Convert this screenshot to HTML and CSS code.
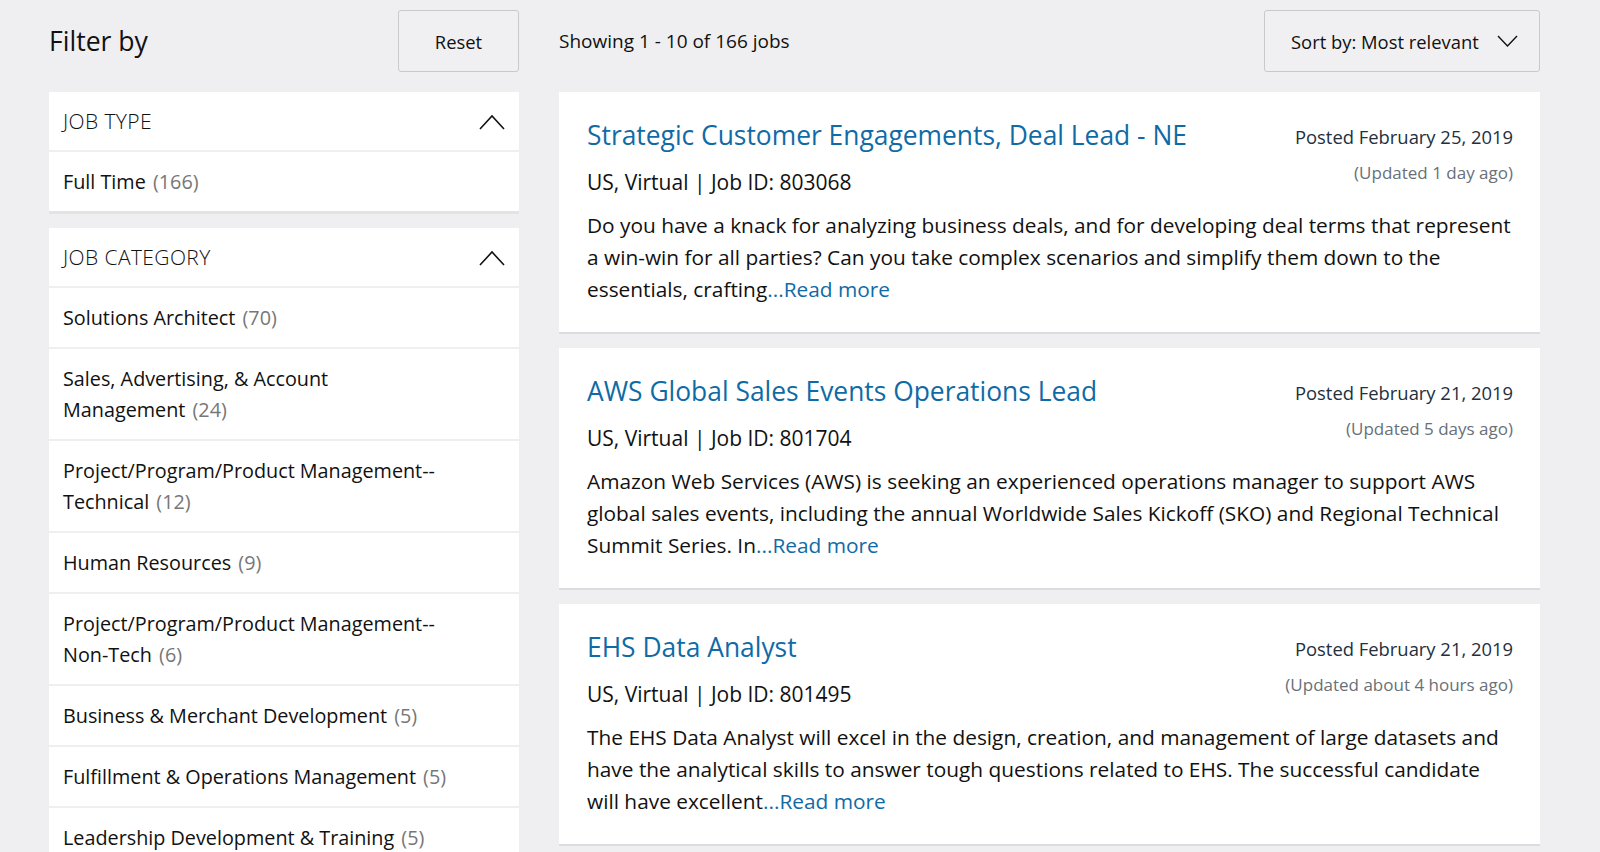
FILE: index.html
```html
<!DOCTYPE html>
<html lang="en">
<head>
	<meta charset="UTF-8">
	<meta name="viewport" content="width=device-width, initial-scale=1.0">
	<title>Jobs</title>
	<link rel="stylesheet" href="styles.css">
</head>
<body>

	<div class="page">
		<aside class="filters">
			<div class="filters-top">
				<h2>Filter by</h2>
				<button class="btn btn-reset">Reset</button>
			</div>

			<div class="panel">
				<div class="panel-head">
					<span>JOB TYPE</span>
					<svg class="chev" width="26" height="16" viewBox="0 0 26 16"><path d="M1 15 L13 2 L25 15" fill="none" stroke="#111" stroke-width="1.6"/></svg>
				</div>
				<a class="panel-item" href="#">Full Time <span class="count">(166)</span></a>
			</div>

			<div class="panel">
				<div class="panel-head">
					<span>JOB CATEGORY</span>
					<svg class="chev" width="26" height="16" viewBox="0 0 26 16"><path d="M1 15 L13 2 L25 15" fill="none" stroke="#111" stroke-width="1.6"/></svg>
				</div>
				<a class="panel-item" href="#">Solutions Architect <span class="count">(70)</span></a>
				<a class="panel-item" href="#">Sales, Advertising, &amp; Account<br>Management <span class="count">(24)</span></a>
				<a class="panel-item" href="#">Project/Program/Product Management--<br>Technical <span class="count">(12)</span></a>
				<a class="panel-item" href="#">Human Resources <span class="count">(9)</span></a>
				<a class="panel-item" href="#">Project/Program/Product Management--<br>Non-Tech <span class="count">(6)</span></a>
				<a class="panel-item" href="#">Business &amp; Merchant Development <span class="count">(5)</span></a>
				<a class="panel-item" href="#">Fulfillment &amp; Operations Management <span class="count">(5)</span></a>
				<a class="panel-item" href="#">Leadership Development &amp; Training <span class="count">(5)</span></a>
			</div>
		</aside>

		<main class="results">
			<div class="results-top">
				<span class="showing">Showing 1 - 10 of 166 jobs</span>
				<button class="btn btn-sort">
					Sort by: Most relevant
					<svg width="21" height="12" viewBox="0 0 21 12"><path d="M1 1 L10.5 11 L20 1" fill="none" stroke="#111" stroke-width="1.4"/></svg>
				</button>
			</div>

			<div class="job">
				<div class="job-head">
					<div>
						<a class="job-title" href="#">Strategic Customer Engagements, Deal Lead - NE</a>
						<p class="job-loc">US, Virtual | Job ID: 803068</p>
					</div>
					<div class="job-meta">
						<p class="posted">Posted February 25, 2019</p>
						<p class="updated">(Updated 1 day ago)</p>
					</div>
				</div>
				<p class="job-desc">Do you have a knack for analyzing business deals, and for developing deal terms that represent a win-win for all parties? Can you take complex scenarios and simplify them down to the essentials, crafting<a href="#">...Read more</a></p>
			</div>

			<div class="job">
				<div class="job-head">
					<div>
						<a class="job-title" href="#">AWS Global Sales Events Operations Lead</a>
						<p class="job-loc">US, Virtual | Job ID: 801704</p>
					</div>
					<div class="job-meta">
						<p class="posted">Posted February 21, 2019</p>
						<p class="updated">(Updated 5 days ago)</p>
					</div>
				</div>
				<p class="job-desc">Amazon Web Services (AWS) is seeking an experienced operations manager to support AWS global sales events, including the annual Worldwide Sales Kickoff (SKO) and Regional Technical Summit Series. In<a href="#">...Read more</a></p>
			</div>

			<div class="job">
				<div class="job-head">
					<div>
						<a class="job-title" href="#">EHS Data Analyst</a>
						<p class="job-loc">US, Virtual | Job ID: 801495</p>
					</div>
					<div class="job-meta">
						<p class="posted">Posted February 21, 2019</p>
						<p class="updated">(Updated about 4 hours ago)</p>
					</div>
				</div>
				<p class="job-desc">The EHS Data Analyst will excel in the design, creation, and management of large datasets and have the analytical skills to answer tough questions related to EHS. The successful candidate will have excellent<a href="#">...Read more</a></p>
			</div>
		</main>
	</div>

</body>
</html>
```

FILE: styles.css
```css
* {
	margin: 0;
	padding: 0;
	box-sizing: border-box;
}

body {
	background-color: #efeff1;
	font-family: "Open Sans", "Noto Sans", sans-serif;
	color: #111;
	overflow: hidden;
}

a {
	text-decoration: none;
}

.page {
	display: flex;
	gap: 40px;
	padding: 10px 0 0 49px;
}

/* left column */
.filters {
	width: 470px;
	flex-shrink: 0;
}

.filters-top {
	display: flex;
	justify-content: space-between;
	align-items: center;
	margin-bottom: 20px;
}

.filters-top h2 {
	font-size: 26.6px;
	font-weight: 400;
}

.btn {
	height: 62px;
	background-color: #f0f0f2;
	border: 1px solid #c9c9cb;
	border-radius: 3px;
	font-family: inherit;
	font-size: 18.4px;
	color: #111;
}

.btn-reset {
	width: 121px;
}

.panel {
	background-color: #fff;
	border-bottom: 3px solid #e3e3e5;
	margin-bottom: 14px;
}

.panel-head {
	display: flex;
	justify-content: space-between;
	align-items: center;
	height: 60px;
	padding: 0 14px 0 14px;
	border-bottom: 2px solid #efeff1;
	font-size: 21px;
	font-weight: 300;
	letter-spacing: 0.4px;
}

.panel-head .chev {
	margin-top: 2px;
}

.panel-item {
	display: block;
	padding: 14px;
	border-bottom: 2px solid #efeff1;
	font-size: 19.8px;
	line-height: 31px;
	color: #111;
}

.panel-item:last-child {
	border-bottom: none;
}

.count {
	color: #777;
	margin-left: 2px;
}

/* right column */
.results {
	width: 981px;
	flex-shrink: 0;
}

.results-top {
	display: flex;
	justify-content: space-between;
	align-items: center;
	margin-bottom: 20px;
}

.showing {
	font-size: 19px;
}

.btn-sort {
	width: 276px;
	display: flex;
	align-items: center;
	justify-content: space-between;
	padding: 0 21px 0 26px;
}

.job {
	background-color: #fff;
	border-bottom: 2px solid #dcdcde;
	margin-bottom: 14px;
	padding: 24px 27px 27px 28px;
}

.job-head {
	display: flex;
	justify-content: space-between;
	align-items: flex-start;
}

.job-title {
	display: block;
	font-size: 26.4px;
	line-height: 38px;
	color: #0f6ba6;
}

.job-loc {
	margin-top: 12px;
	font-size: 21px;
	line-height: 32px;
}

.job-meta {
	text-align: right;
	padding-top: 9px;
}

.posted {
	font-size: 18.4px;
	line-height: 24px;
	color: #232f3e;
}

.updated {
	margin-top: 13px;
	font-size: 17px;
	line-height: 22px;
	color: #687078;
}

.job-desc {
	margin-top: 11px;
	font-size: 20.85px;
	line-height: 32px;
}

.job-desc a {
	color: #0f6ba6;
}
```
